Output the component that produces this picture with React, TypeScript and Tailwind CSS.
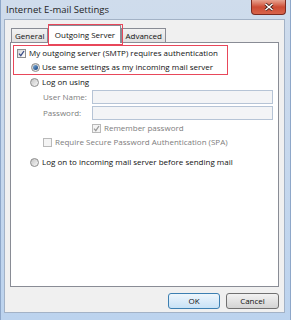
import React from 'react';

const FONT = "font-['Open_Sans','Noto_Sans',sans-serif]";

function CheckBox({ checked = false, disabled = false }: { checked?: boolean; disabled?: boolean }) {
  return (
    <div
      className={`w-[9px] h-[9px] shrink-0 border flex items-center justify-center ${
        disabled ? 'border-[#b9b9b9] bg-[#f4f4f4]' : 'border-[#8e8f8f] bg-gradient-to-br from-[#d6d6d6] to-[#ffffff]'
      }`}
    >
      {checked && (
        <svg width="7" height="7" viewBox="0 0 7 7">
          <path
            d="M1 3.6 L2.8 5.6 L6 1"
            fill="none"
            stroke={disabled ? '#9a9a9a' : '#3b4f8a'}
            strokeWidth="1.3"
          />
        </svg>
      )}
    </div>
  );
}

function Radio({ checked = false }: { checked?: boolean }) {
  return (
    <div className="w-[9px] h-[9px] shrink-0 rounded-full border border-[#8c8c8c] bg-gradient-to-br from-[#c4c4c4] to-[#f8f8f8] flex items-center justify-center">
      {checked && <div className="w-[5px] h-[5px] rounded-full bg-gradient-to-br from-[#7fb2e0] to-[#143f78]" />}
    </div>
  );
}

function Tab({ label, active = false }: { label: string; active?: boolean }) {
  if (active) {
    return (
      <div className="relative z-10 -mb-px h-[18px] w-[73px] border border-b-0 border-[#898c95] bg-white flex items-center justify-center">
        {label}
        {/* red annotation box */}
        <div className="absolute -left-[1px] -top-[2px] w-[75px] h-[21px] border border-[#e8475a]" />
      </div>
    );
  }
  return (
    <div className="h-[14px] px-[3px] border border-b-0 border-[#898c95] bg-gradient-to-b from-[#f2f2f2] to-[#e0e0e0] flex items-center">
      {label}
    </div>
  );
}

function Field({ label }: { label: string }) {
  return (
    <div className="h-[16px] flex items-center pl-[32px] pr-[5px]">
      <span className="w-[49px] text-[#7d7d7d]">{label}</span>
      <div className="flex-1 h-[14px] border border-[#b6c4d6] bg-[#f3f4f6]" />
    </div>
  );
}

function Button({ label, primary = false }: { label: string; primary?: boolean }) {
  return (
    <div
      className={`h-[16px] rounded-[3px] border flex items-center justify-center ${
        primary
          ? 'w-[52px] border-[#3c7fb1] bg-gradient-to-b from-[#eef6fc] to-[#c8e2f6]'
          : 'w-[53px] border-[#707070] bg-gradient-to-b from-[#f2f2f2] to-[#d4d4d4]'
      }`}
    >
      {label}
    </div>
  );
}

export default function App() {
  return (
    <div
      className={`w-[291px] h-[320px] flex flex-col bg-gradient-to-b from-[#cfdcec] to-[#bcd3ee] border-l border-r border-[#8ea7c9] ${FONT} text-[8px] text-[#111111]`}
    >
      {/* Title bar */}
      <div className="h-[19px] flex items-start">
        <span className="pl-[5px] pt-[3px] text-[9.5px] text-[#1e1e1e]">Internet E-mail Settings</span>
        <div className="ml-auto mr-[4px] w-[35px] h-[15px] rounded-b-[4px] border border-t-0 border-[#7a2a20] bg-gradient-to-b from-[#e7a391] via-[#cc4b34] to-[#d8634a] flex items-center justify-center">
          <svg width="10" height="8" viewBox="0 0 10 8">
            <path d="M1.5 1 L8.5 7 M8.5 1 L1.5 7" stroke="#3c1a16" strokeWidth="3" />
            <path d="M1.5 1 L8.5 7 M8.5 1 L1.5 7" stroke="#ffffff" strokeWidth="1.6" />
          </svg>
        </div>
      </div>

      {/* Client area */}
      <div className="flex-1 ml-[3px] mr-[5px] mb-[7px] border border-[#a3b2c6] bg-[#f0f0f0] pt-[5px] px-[5px] pb-[3px] flex flex-col">
        {/* Tabs */}
        <div className="flex items-end pl-[1px]">
          <Tab label="General" />
          <Tab label="Outgoing Server" active />
          <Tab label="Advanced" />
        </div>

        {/* Panel */}
        <div className="flex-1 border border-[#898c95] bg-white pt-[2px] pl-[2px] flex flex-col">
          <div className="w-[215px] border border-[#e8475a] flex flex-col">
            <div className="h-[14px] flex items-center pl-[3px] gap-[3px]">
              <CheckBox checked />
              <span>My outgoing server (SMTP) requires authentication</span>
            </div>
            <div className="h-[14px] flex items-center pl-[17px] gap-[2px]">
              <Radio checked />
              <span>Use same settings as my incoming mail server</span>
            </div>
          </div>

          <div className="-ml-[2px] flex flex-col">
            <div className="h-[14px] flex items-center pl-[19px] gap-[3px]">
              <Radio />
              <span>Log on using</span>
            </div>
            <Field label="User Name:" />
            <Field label="Password:" />
            <div className="h-[14px] flex items-center pl-[81px] gap-[3px] text-[#7d7d7d]">
              <CheckBox checked disabled />
              <span>Remember password</span>
            </div>
            <div className="h-[14px] flex items-center pl-[32px] gap-[3px] text-[#7d7d7d]">
              <CheckBox disabled />
              <span>Require Secure Password Authentication (SPA)</span>
            </div>
            <div className="mt-[6px] h-[14px] flex items-center pl-[19px] gap-[3px]">
              <Radio />
              <span>Log on to incoming mail server before sending mail</span>
            </div>
          </div>
        </div>

        {/* Buttons */}
        <div className="mt-[6px] flex justify-end gap-[6px]">
          <Button label="OK" primary />
          <Button label="Cancel" />
        </div>
      </div>
    </div>
  );
}
